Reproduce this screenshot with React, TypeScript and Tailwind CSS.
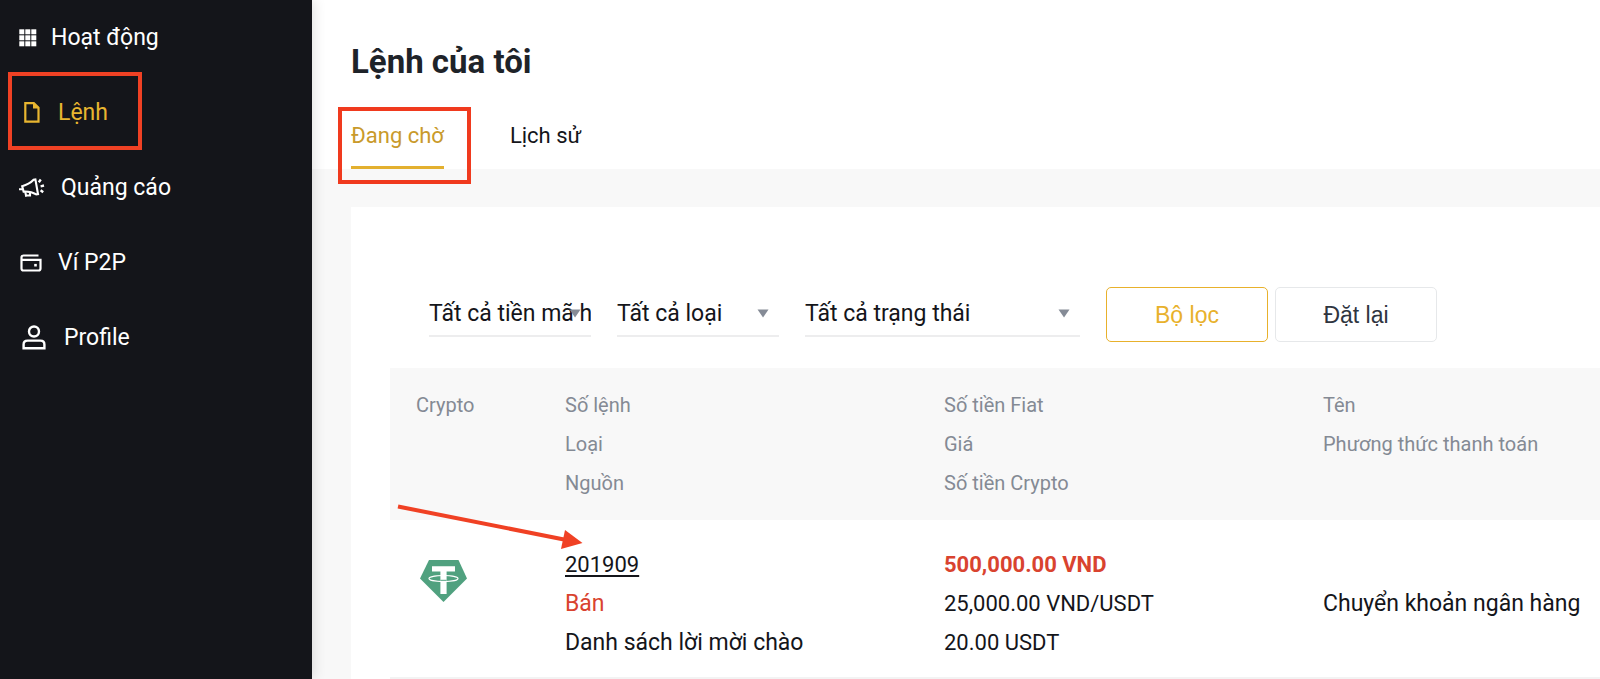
import type { ReactNode } from "react";

const GridIcon = () => (
  <svg width="18" height="18" viewBox="0 0 18 18" fill="currentColor" aria-hidden="true">
    {[0, 6, 12].map((y) =>
      [0, 6, 12].map((x) => <rect key={`${x}-${y}`} x={x + 0.3} y={y + 0.3} width="5" height="5" />)
    )}
  </svg>
);

const DocIcon = () => (
  <svg width="16" height="21" viewBox="0 0 16 21" aria-hidden="true">
    <path d="M1.3 1.2H9.8L14.5 5.8V19.6H1.3Z" fill="none" stroke="currentColor" strokeWidth="2.2" />
    <path d="M9 1H10.4L15 5.4V6.500H9Z" fill="currentColor" />
  </svg>
);

const MegaphoneIcon = () => (
  <svg width="26" height="20" viewBox="0 0 26 20" fill="none" stroke="currentColor" strokeWidth="2.1" aria-hidden="true">
    <path d="M3.2 8.2C8 7 11.500 5 14.600 1.800L16.400 1.400L19 16.200L17.200 16.400C13 13.800 9.500 13.300 4.600 13.600Z" />
    <path d="M0 11.300H3.500M6.200 13.600L7.300 18.800M11 14V17.500H7.300" />
    <path d="M19.800 4.200L21.800 1.600M21.600 8.300L25 7.500M21.600 12.300L24.200 14.300" strokeWidth="2.400" />
  </svg>
);

const WalletIcon = () => (
  <svg width="22" height="18" viewBox="0 0 22 18" fill="none" stroke="currentColor" strokeWidth="2.2" aria-hidden="true">
    <path d="M18.500 1.500H3.500Q1.500 1.500 1.500 3.500V14.500Q1.500 16.500 3.500 16.500H18.500Q20.500 16.500 20.500 14.500V5.800H2" />
    <path d="M14.200 11.200H16.800" strokeWidth="2.600" />
  </svg>
);

const ProfileIcon = () => (
  <svg width="24" height="25" viewBox="0 0 24 25" fill="none" stroke="currentColor" strokeWidth="2.400" aria-hidden="true">
    <circle cx="12" cy="6.500" r="5" />
    <path d="M1.600 23.200V19.500Q1.600 15.600 5.500 15.600H18.500Q22.400 15.600 22.400 19.500V23.200Z" />
  </svg>
);

const TetherIcon = () => (
  <svg width="47" height="42" viewBox="0 0 47 42" role="img" aria-label="USDT">
    <path d="M9 0H38.500L47 18.500L23.500 42L0 18.500Z" fill="#50a17f" />
    <path d="M12 6.200H35V11.500H26.600V34H20.400V11.500H12Z" fill="#fff" />
    <ellipse cx="23.500" cy="18.500" rx="14.500" ry="3" fill="none" stroke="#fff" strokeWidth="1.200" />
    <path d="M20.400 20.300H26.600" stroke="#50a17f" strokeWidth="1" />
  </svg>
);

const navItems: { label: string; icon: ReactNode; spacing: string; active?: boolean }[] = [
  { label: "Hoạt động", icon: <GridIcon />, spacing: "pl-[19px] gap-[14px]" },
  { label: "Lệnh", icon: <DocIcon />, spacing: "pl-6 gap-[18px]", active: true },
  { label: "Quảng cáo", icon: <MegaphoneIcon />, spacing: "pl-[19px] gap-4" },
  { label: "Ví P2P", icon: <WalletIcon />, spacing: "pl-5 gap-4" },
  { label: "Profile", icon: <ProfileIcon />, spacing: "pl-[22px] gap-[18px]" },
];

function Filter({ label, text, width }: { label: string; text: string; width: string }) {
  return (
    <div className={`relative shrink-0 overflow-hidden border-b-2 border-[#ededee] ${width}`}>
      <select aria-label={label} className="h-[45px] w-full appearance-none bg-transparent p-0 pt-[3px] text-[23px] text-[#14151a] outline-none">
        <option>{text}</option>
      </select>
      <svg className="pointer-events-none absolute right-[10px] top-[19px]" width="12" height="9" viewBox="0 0 12 9" aria-hidden="true">
        <path d="M0.500 0.500H11.500L6 8.500Z" fill="#858b96" />
      </svg>
    </div>
  );
}

export default function App() {
  return (
    <div className="flex min-h-screen overflow-x-hidden bg-[#f8f8f8] font-[Roboto,'Noto_Sans',sans-serif] text-[#14151a]">
      <aside className="relative z-10 w-[312px] shrink-0 bg-[#14151a] shadow-[2px_0_12px_rgba(0,0,0,0.12)]">
        <nav>
          {navItems.map((item) => (
            <a
              key={item.label}
              href="#"
              className={`flex h-[75px] items-center text-[23px] ${item.spacing} ${item.active ? "text-[#e8b530]" : "text-white"}`}
            >
              {item.icon}
              <span className="pt-0.5">{item.label}</span>
            </a>
          ))}
        </nav>
        <div className="pointer-events-none absolute left-2 top-[72px] h-[78px] w-[134px] border-4 border-[#f04124]" />
      </aside>

      <main className="flex min-w-0 flex-1 flex-col">
        <header className="bg-white pl-[39px] pt-10">
          <h1 className="text-[33px] font-bold leading-[44px] text-[#1e2329]">Lệnh của tôi</h1>
          <div className="mt-6 flex gap-[66px] text-[22px] leading-[56px]">
            <div className="relative">
              <a href="#" className="block h-[61px] border-b-3 border-[#e3b02f] text-[#c99a2b]">Đang chờ</a>
              <div className="pointer-events-none absolute -left-[13px] -top-px h-[77px] w-[133px] border-4 border-[#f03a1e]" />
            </div>
            <a href="#">Lịch sử</a>
          </div>
        </header>

        <section className="ml-[39px] mt-[38px] flex-1 bg-white pl-[39px] pt-20">
          <form className="flex items-start pl-[39px]" onSubmit={(e) => e.preventDefault()}>
            <div className="flex gap-[26px] pt-[3px]">
              <Filter label="Tiền mã hóa" text="Tất cả tiền mã hóa" width="w-[162px]" />
              <Filter label="Loại" text="Tất cả loại" width="w-[162px]" />
              <Filter label="Trạng thái" text="Tất cả trạng thái" width="w-[275px]" />
            </div>
            <div className="ml-[26px] flex gap-[7px] font-['Liberation_Sans',sans-serif] text-[23px]">
              <button type="submit" className="h-[55px] w-[162px] rounded-[5px] border border-[#e8b12c] pt-0.5 text-[#e8b12c]">Bộ lọc</button>
              <button type="reset" className="h-[55px] w-[162px] rounded-[5px] border border-[#e6e8ea] pt-0.5 text-[#2f353f]">Đặt lại</button>
            </div>
          </form>

          <table className="mt-[26px] w-full table-fixed text-left leading-[39px]">
            <colgroup>
              <col className="w-[175px]" />
              <col className="w-[379px]" />
              <col className="w-[379px]" />
              <col />
            </colgroup>
            <thead className="bg-[#f8f8f8] text-[20px] text-[#848a94]">
              <tr className="align-top">
                <th className="pb-[17px] pl-[26px] pt-[18px] font-normal">Crypto</th>
                <th className="pb-[17px] pt-[18px] font-normal">
                  <div>Số lệnh</div>
                  <div>Loại</div>
                  <div>Nguồn</div>
                </th>
                <th className="pb-[17px] pt-[18px] font-normal">
                  <div>Số tiền Fiat</div>
                  <div>Giá</div>
                  <div>Số tiền Crypto</div>
                </th>
                <th className="whitespace-nowrap pb-[17px] pt-[18px] font-normal">
                  <div>Tên</div>
                  <div>Phương thức thanh toán</div>
                </th>
              </tr>
            </thead>
            <tbody className="text-[23px]">
              <tr className="border-b-2 border-[#f3f3f3] align-top">
                <td className="pl-[30px] pt-10"><TetherIcon /></td>
                <td className="relative pb-[15px] pt-[25px]">
                  <a href="#" className="block text-[22px] underline decoration-2 underline-offset-3">201909</a>
                  <div className="text-[#d9432f]">Bán</div>
                  <div>Danh sách lời mời chào</div>
                  <svg className="pointer-events-none absolute -left-[169px] -top-4" width="188" height="48" viewBox="0 0 188 48" aria-hidden="true">
                    <path d="M2 2.500L168 35.500" stroke="#f04124" strokeWidth="4" />
                    <path d="M169 26L186.500 39L165 45Z" fill="#f04124" />
                  </svg>
                </td>
                <td className="pb-[15px] pt-[25px] text-[22px]">
                  <div className="font-bold text-[#d9432f]">500,000.00 VND</div>
                  <div>25,000.00 VND/USDT</div>
                  <div>20.00 USDT</div>
                </td>
                <td className="whitespace-nowrap pt-16">Chuyển khoản ngân hàng</td>
              </tr>
            </tbody>
          </table>
        </section>
      </main>
    </div>
  );
}
